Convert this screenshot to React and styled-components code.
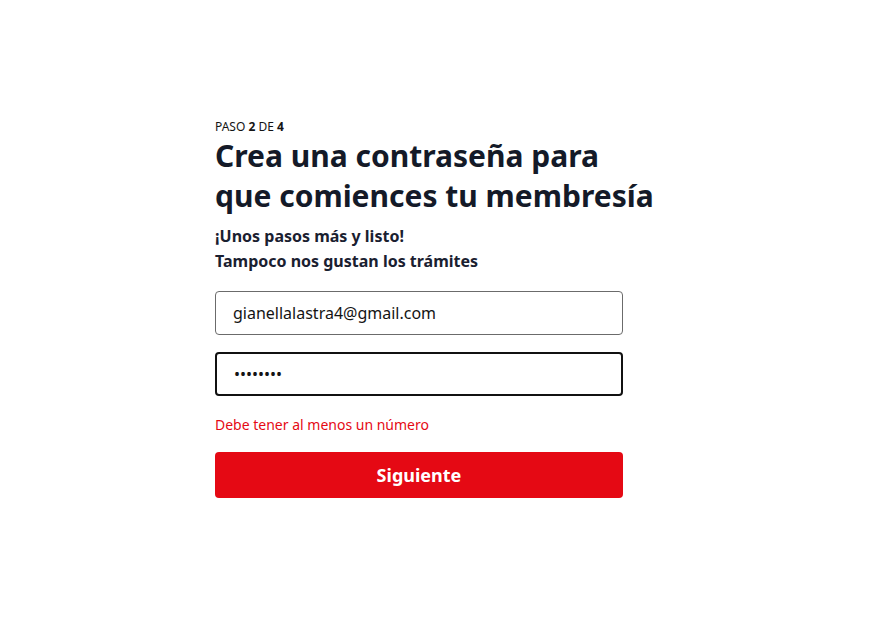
import React, { useState } from "react"
import styled, { createGlobalStyle } from "styled-components"

const Global = createGlobalStyle`
  html, body { margin: 0; padding: 0; background: #fff; }
  body { font-family: "Noto Sans", "Open Sans", sans-serif; color: #141414; }
  * { box-sizing: border-box; }
`

const Page = styled.div`
  width: 896px;
  height: 619px;
  padding: 118px 0 0 215px;
`

const Form = styled.form`
  width: 408px;
  display: flex;
  flex-direction: column;
`

const Step = styled.div`
  font-size: 12px;
  line-height: 18px;
  color: #141414;
  b { font-weight: 700; }
`

const Title = styled.h1`
  margin: 0;
  width: 440px;
  font-size: 30px;
  line-height: 40px;
  font-weight: 700;
  color: #141a28;
`

const Sub = styled.p`
  margin: 8px 0 0;
  font-size: 16px;
  line-height: 25px;
  font-weight: 700;
  color: #1a2030;
`

const Input = styled.input`
  height: 44px;
  width: 100%;
  margin-top: ${p => p.$top}px;
  padding: 0 17px;
  font-family: inherit;
  font-size: 16px;
  color: #141414;
  border-radius: 4px;
  border: ${p => (p.$active ? "2px solid #111" : "1px solid #6b6b6b")};
  outline: none;
  background: #fff;
`

const Error = styled.div`
  margin-top: 19px;
  font-size: 14px;
  line-height: 20px;
  color: #e50914;
`

const Button = styled.button`
  margin-top: 17px;
  height: 46px;
  width: 100%;
  border: none;
  border-radius: 4px;
  background: #e50914;
  color: #fff;
  font-family: inherit;
  font-size: 18px;
  font-weight: 700;
  cursor: pointer;
`

export default function App() {
  const [email, setEmail] = useState("gianellalastra4@gmail.com")
  const [pass, setPass] = useState("abcdefgh")
  return (
    <Page>
      <Global />
      <Form onSubmit={e => e.preventDefault()}>
        <Step>PASO <b>2</b> DE <b>4</b></Step>
        <Title>Crea una contraseña para que comiences tu membresía</Title>
        <Sub>¡Unos pasos más y listo!<br />Tampoco nos gustan los trámites</Sub>
        <Input $top={17} value={email} onChange={e => setEmail(e.target.value)} />
        <Input $top={17} $active type="password" value={pass} onChange={e => setPass(e.target.value)} />
        <Error>Debe tener al menos un número</Error>
        <Button type="submit">Siguiente</Button>
      </Form>
    </Page>
  )
}
